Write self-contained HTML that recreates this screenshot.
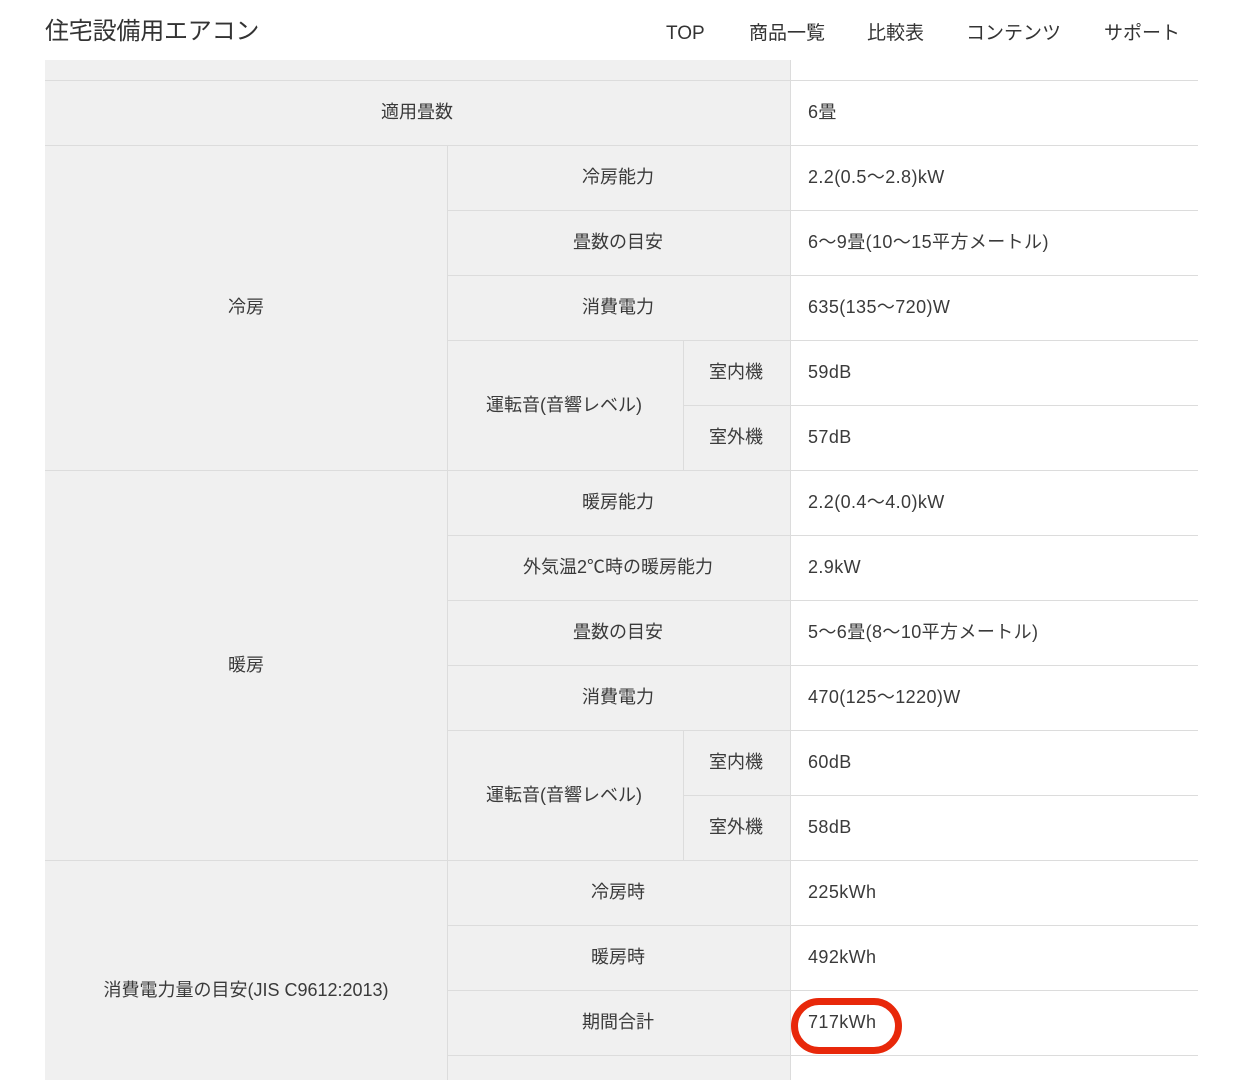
<!DOCTYPE html>
<html><head><meta charset="utf-8"><style>
body{margin:0;width:1248px;height:1080px;overflow:hidden;background:#fff;font-family:"Liberation Sans","Noto Sans CJK JP",sans-serif;color:#3a3a3a;position:relative}
.a{position:absolute}
.t{position:absolute;font-size:18px;line-height:24px;white-space:nowrap;transform:translate(-50%,-50%)}
.v{position:absolute;font-size:18px;line-height:24px;white-space:nowrap;transform:translateY(-50%);left:808px;letter-spacing:0.4px}
.h{position:absolute;height:1px;background:#dcdcdc}
.vl{position:absolute;width:1px;background:#dcdcdc}
</style></head><body>
<div class="a" style="left:45px;top:17px;font-size:24px;line-height:30px;color:#333;letter-spacing:-0.2px">住宅設備用エアコン</div>
<div class="a" style="left:666px;top:22px;font-size:19px;line-height:24px;color:#333">TOP</div>
<div class="a" style="left:749px;top:22px;font-size:19px;line-height:24px;color:#333">商品一覧</div>
<div class="a" style="left:867px;top:22px;font-size:19px;line-height:24px;color:#333">比較表</div>
<div class="a" style="left:966px;top:22px;font-size:19px;line-height:24px;color:#333">コンテンツ</div>
<div class="a" style="left:1104px;top:22px;font-size:19px;line-height:24px;color:#333">サポート</div>

<div class="a" style="left:45px;top:60px;width:745px;height:1020px;background:#f0f0f0"></div>

<div class="h" style="left:45px;width:1153px;top:80px"></div>
<div class="h" style="left:45px;width:1153px;top:145px"></div>
<div class="h" style="left:45px;width:1153px;top:470px"></div>
<div class="h" style="left:45px;width:1153px;top:860px"></div>
<div class="h" style="left:447px;width:751px;top:210px"></div>
<div class="h" style="left:447px;width:751px;top:275px"></div>
<div class="h" style="left:447px;width:751px;top:340px"></div>
<div class="h" style="left:683px;width:515px;top:405px"></div>
<div class="h" style="left:447px;width:751px;top:535px"></div>
<div class="h" style="left:447px;width:751px;top:600px"></div>
<div class="h" style="left:447px;width:751px;top:665px"></div>
<div class="h" style="left:447px;width:751px;top:730px"></div>
<div class="h" style="left:683px;width:515px;top:795px"></div>
<div class="h" style="left:447px;width:751px;top:925px"></div>
<div class="h" style="left:447px;width:751px;top:990px"></div>
<div class="h" style="left:447px;width:751px;top:1055px"></div>
<div class="vl" style="left:447px;top:145px;height:935px"></div>
<div class="vl" style="left:683px;top:340px;height:130px"></div>
<div class="vl" style="left:683px;top:730px;height:130px"></div>
<div class="vl" style="left:790px;top:60px;height:1020px"></div>

<div class="t" style="left:417px;top:112px">適用畳数</div>
<div class="v" style="top:112px">6畳</div>
<div class="t" style="left:246px;top:307px">冷房</div>
<div class="t" style="left:618px;top:177px">冷房能力</div><div class="v" style="top:177px">2.2(0.5～2.8)kW</div>
<div class="t" style="left:618px;top:242px">畳数の目安</div><div class="v" style="top:242px">6～9畳(10～15平方メートル)</div>
<div class="t" style="left:618px;top:307px">消費電力</div><div class="v" style="top:307px">635(135～720)W</div>
<div class="t" style="left:564px;top:405px">運転音(音響レベル)</div>
<div class="t" style="left:736px;top:372px">室内機</div><div class="v" style="top:372px">59dB</div>
<div class="t" style="left:736px;top:437px">室外機</div><div class="v" style="top:437px">57dB</div>
<div class="t" style="left:246px;top:665px">暖房</div>
<div class="t" style="left:618px;top:502px">暖房能力</div><div class="v" style="top:502px">2.2(0.4～4.0)kW</div>
<div class="t" style="left:618px;top:567px">外気温2℃時の暖房能力</div><div class="v" style="top:567px">2.9kW</div>
<div class="t" style="left:618px;top:632px">畳数の目安</div><div class="v" style="top:632px">5～6畳(8～10平方メートル)</div>
<div class="t" style="left:618px;top:697px">消費電力</div><div class="v" style="top:697px">470(125～1220)W</div>
<div class="t" style="left:564px;top:795px">運転音(音響レベル)</div>
<div class="t" style="left:736px;top:762px">室内機</div><div class="v" style="top:762px">60dB</div>
<div class="t" style="left:736px;top:827px">室外機</div><div class="v" style="top:827px">58dB</div>
<div class="t" style="left:246px;top:990px">消費電力量の目安(JIS C9612:2013)</div>
<div class="t" style="left:618px;top:892px">冷房時</div><div class="v" style="top:892px">225kWh</div>
<div class="t" style="left:618px;top:957px">暖房時</div><div class="v" style="top:957px">492kWh</div>
<div class="t" style="left:618px;top:1022px">期間合計</div><div class="v" style="top:1022px">717kWh</div>
<div class="a" style="left:791px;top:998px;width:97px;height:42px;border:7px solid #e8280a;border-radius:28px"></div>
</body></html>
